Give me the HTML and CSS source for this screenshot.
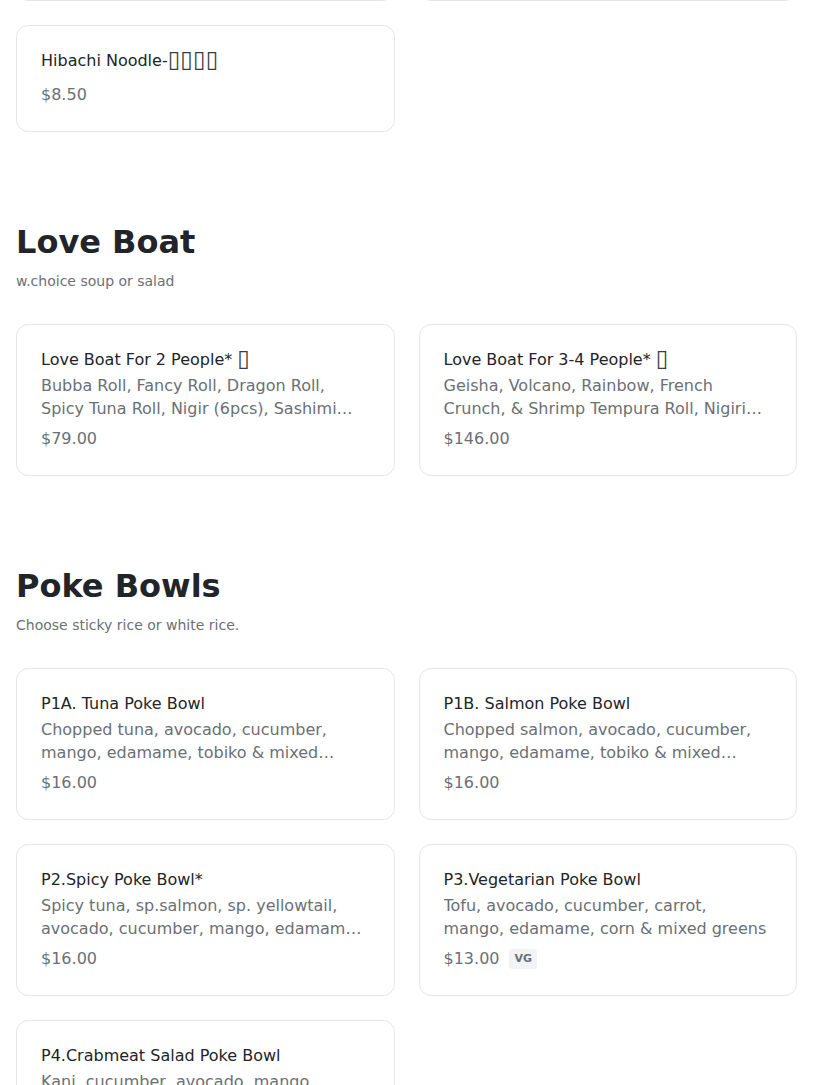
FILE: index.html
```html
<!DOCTYPE html>
<html lang="en">
<head>
<meta charset="utf-8">
<title>Menu</title>
<link rel="stylesheet" href="styles.css">
</head>
<body>
<main class="menu">
  <section class="section section-first">
    <div class="grid">
      <article class="card">
        <h3 class="item-name">Hibachi Chicken</h3>
        <p class="item-price">$12.00</p>
      </article>
      <article class="card">
        <h3 class="item-name">Hibachi Steak</h3>
        <p class="item-price">$14.00</p>
      </article>
      <article class="card">
        <h3 class="item-name">Hibachi Noodle-<span class="glyph">▯▯▯▯</span></h3>
        <p class="item-price">$8.50</p>
      </article>
    </div>
  </section>

  <section class="section">
    <h2 class="section-title">Love Boat</h2>
    <p class="section-sub">w.choice soup or salad</p>
    <div class="grid">
      <article class="card">
        <h3 class="item-name">Love Boat For 2 People* <span class="glyph">▯</span></h3>
        <p class="item-desc">Bubba Roll, Fancy Roll, Dragon Roll, Spicy Tuna Roll, Nigir (6pcs), Sashimi (9pcs)</p>
        <p class="item-price">$79.00</p>
      </article>
      <article class="card">
        <h3 class="item-name">Love Boat For 3-4 People* <span class="glyph">▯</span></h3>
        <p class="item-desc">Geisha, Volcano, Rainbow, French Crunch, &amp; Shrimp Tempura Roll, Nigiri (10pcs), Sashimi (15pcs)</p>
        <p class="item-price">$146.00</p>
      </article>
    </div>
  </section>

  <section class="section">
    <h2 class="section-title">Poke Bowls</h2>
    <p class="section-sub">Choose sticky rice or white rice.</p>
    <div class="grid">
      <article class="card">
        <h3 class="item-name">P1A. Tuna Poke Bowl</h3>
        <p class="item-desc">Chopped tuna, avocado, cucumber, mango, edamame, tobiko &amp; mixed greens</p>
        <p class="item-price">$16.00</p>
      </article>
      <article class="card">
        <h3 class="item-name">P1B. Salmon Poke Bowl</h3>
        <p class="item-desc">Chopped salmon, avocado, cucumber, mango, edamame, tobiko &amp; mixed greens</p>
        <p class="item-price">$16.00</p>
      </article>
      <article class="card">
        <h3 class="item-name">P2.Spicy Poke Bowl*</h3>
        <p class="item-desc">Spicy tuna, sp.salmon, sp. yellowtail, avocado, cucumber, mango, edamame, tobiko &amp; mixed greens</p>
        <p class="item-price">$16.00</p>
      </article>
      <article class="card">
        <h3 class="item-name">P3.Vegetarian Poke Bowl</h3>
        <p class="item-desc">Tofu, avocado, cucumber, carrot, mango, edamame, corn &amp; mixed greens</p>
        <p class="item-price">$13.00 <span class="badge">VG</span></p>
      </article>
      <article class="card">
        <h3 class="item-name">P4.Crabmeat Salad Poke Bowl</h3>
        <p class="item-desc">Kani, cucumber, avocado, mango, edamame, tobiko &amp; mixed greens</p>
        <p class="item-price">$16.00</p>
      </article>
    </div>
  </section>
</main>
</body>
</html>
```
FILE: styles.css
```css
html, body {
  margin: 0;
  padding: 0;
  background: #ffffff;
}

body {
  font-family: "DejaVu Sans", "Noto Sans CJK SC", sans-serif;
  color: #212529;
  overflow: hidden;
}

.menu {
  padding: 0 16px;
  margin-top: -106px;
}

.section {
  padding-top: 91px;
}

.section-first {
  padding-top: 0;
}

.section-title {
  margin: 0;
  font-size: 32px;
  line-height: 38px;
  font-weight: 700;
  color: #212529;
}

.section-sub {
  margin: 10px 0 0;
  font-size: 14px;
  line-height: 21px;
  color: #6b7075;
}

.section-sub + .grid {
  margin-top: 32px;
}

.grid {
  display: grid;
  grid-template-columns: 1fr 1fr;
  gap: 24px;
}

.card {
  border: 1px solid #e4e6e9;
  border-radius: 12px;
  padding: 24px;
  background: #fff;
  display: flex;
  flex-direction: column;
}

.item-name {
  margin: 0;
  font-size: 16px;
  line-height: 21px;
  font-weight: 400;
  color: #212529;
}

.glyph {
  font-size: 23px;
  line-height: 0;
  vertical-align: -1px;
  color: #3a3d40;
}

.item-desc {
  margin: 4px 0 0;
  font-size: 16px;
  line-height: 23px;
  color: #6b7075;
  display: -webkit-box;
  -webkit-box-orient: vertical;
  -webkit-line-clamp: 2;
  overflow: hidden;
}

.item-price {
  margin: 12px 0 0;
  font-size: 16px;
  line-height: 24px;
  color: #6b7075;
  display: flex;
  align-items: center;
  gap: 10px;
}

.item-desc + .item-price {
  margin-top: 7px;
}

.badge {
  display: inline-block;
  font-size: 11px;
  line-height: 20px;
  font-weight: 700;
  padding: 0 5px;
  border-radius: 4px;
  background: #f1f3f5;
  color: #6b7075;
}
```
